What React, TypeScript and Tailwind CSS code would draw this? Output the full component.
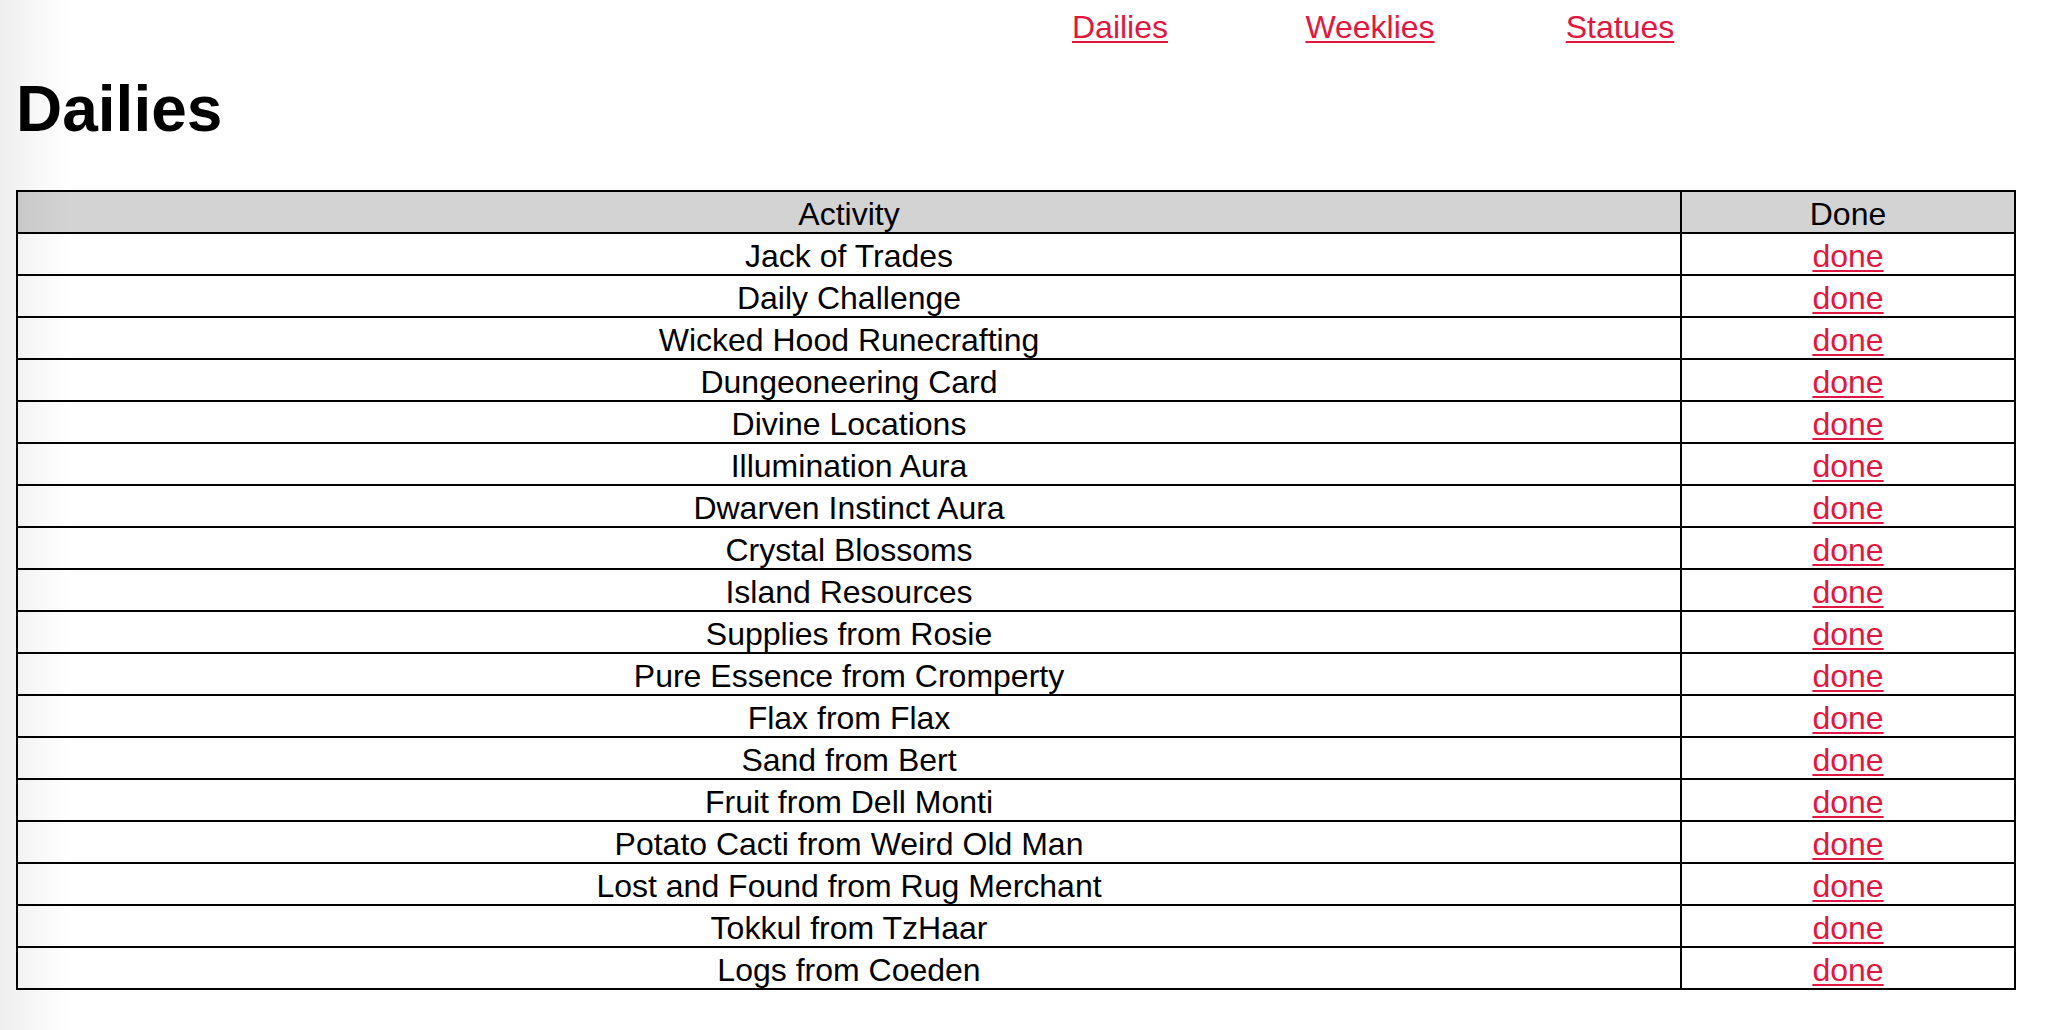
import React from 'react';

const ACTIVITIES = [
  'Jack of Trades',
  'Daily Challenge',
  'Wicked Hood Runecrafting',
  'Dungeoneering Card',
  'Divine Locations',
  'Illumination Aura',
  'Dwarven Instinct Aura',
  'Crystal Blossoms',
  'Island Resources',
  'Supplies from Rosie',
  'Pure Essence from Cromperty',
  'Flax from Flax',
  'Sand from Bert',
  'Fruit from Dell Monti',
  'Potato Cacti from Weird Old Man',
  'Lost and Found from Rug Merchant',
  'Tokkul from TzHaar',
  'Logs from Coeden',
];

const NAV = ['Dailies', 'Weeklies', 'Statues'];

export default function App() {
  return (
    <div className="relative min-h-screen bg-white font-['Liberation_Sans',Arial,sans-serif] text-black">
      {/* soft shade along the left edge */}
      <div className="pointer-events-none absolute inset-y-0 left-0 w-[70px] bg-gradient-to-r from-black/[0.065] to-transparent" />

      <nav className="flex pl-[995px] pt-[9px]">
        {NAV.map(item => (
          <a
            key={item}
            href="#"
            className="w-[250px] text-center text-[32px] leading-[36px] text-[#e2173f] underline decoration-[1.5px] underline-offset-[3px]"
          >
            {item}
          </a>
        ))}
      </nav>

      <h1 className="ml-4 mt-[27px] text-[64px] font-bold leading-[74px]">Dailies</h1>

      <table className="ml-4 mt-[44px] w-[2000px] border-collapse border-2 border-black text-[32px] leading-[36px]">
        <thead>
          <tr className="bg-[#d3d3d3]">
            <th className="h-[42px] w-[1664px] border-2 border-black px-0 pb-0 pt-[4px] text-center font-normal">Activity</th>
            <th className="h-[42px] border-2 border-black px-0 pb-0 pt-[4px] text-center font-normal">Done</th>
          </tr>
        </thead>
        <tbody>
          {ACTIVITIES.map(name => (
            <tr key={name}>
              <td className="h-[42px] border-2 border-black px-0 pb-0 pt-[4px] text-center">{name}</td>
              <td className="h-[42px] border-2 border-black px-0 pb-0 pt-[4px] text-center">
                <a href="#" className="text-[#e2173f] underline decoration-[1.5px] underline-offset-[3px]">
                  done
                </a>
              </td>
            </tr>
          ))}
        </tbody>
      </table>
    </div>
  );
}
